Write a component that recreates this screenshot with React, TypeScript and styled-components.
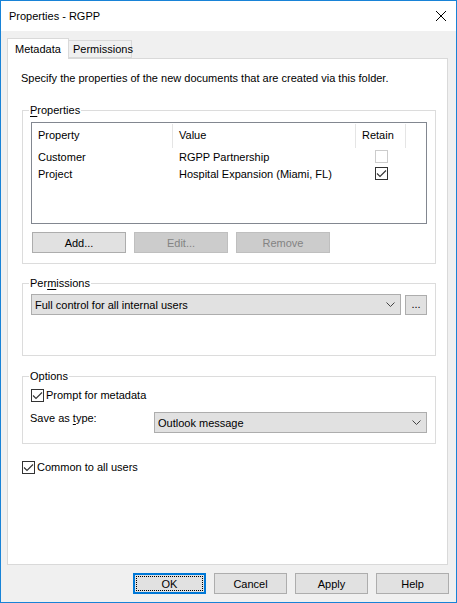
import React from "react";
import styled, { createGlobalStyle } from "styled-components";

const FONT = `"Liberation Sans", Arial, sans-serif`;

const GlobalStyle = createGlobalStyle`
  html, body { margin: 0; padding: 0; background: #ffffff; }
  body { font-family: ${FONT}; font-size: 11px; color: #000; }
  *, *::before, *::after { box-sizing: border-box; }
`;

const Window = styled.div`
  width: 457px;
  height: 603px;
  border: 1px solid #1883d7;
  background: #f0f0f0;
  display: flex;
  flex-direction: column;
  overflow: hidden;
`;

const TitleBar = styled.div`
  height: 30px;
  flex: none;
  background: #ffffff;
  display: flex;
  align-items: center;
  justify-content: space-between;
  padding: 0 10px 0 8px;
`;

const Title = styled.div`
  font-size: 11px;
  line-height: 16px;
  color: #000;
`;

const CloseIcon = styled.svg`
  width: 10px;
  height: 10px;
  display: block;
`;

const Body = styled.div`
  flex: 1;
  display: flex;
  flex-direction: column;
  padding: 7px 8px 0 6px;
  min-height: 0;
`;

const TabStrip = styled.div`
  display: flex;
  align-items: flex-end;
  height: 20px;
  flex: none;
`;

const Tab = styled.div<{ $active?: boolean }>`
  position: relative;
  z-index: ${(p) => (p.$active ? 1 : 0)};
  height: ${(p) => (p.$active ? "21px" : "18px")};
  margin-bottom: ${(p) => (p.$active ? "-1px" : "0")};
  width: ${(p) => (p.$active ? "62px" : "63px")};
  border: 1px solid #d9d9d9;
  border-bottom: ${(p) => (p.$active ? "none" : "1px solid #d9d9d9")};
  border-left: ${(p) => (p.$active ? "1px solid #d9d9d9" : "none")};
  background: ${(p) => (p.$active ? "#ffffff" : "#f0f0f0")};
  padding-left: ${(p) => (p.$active ? "7px" : "4px")};
  padding-bottom: ${(p) => (p.$active ? "1px" : "0")};
  display: flex;
  align-items: center;
  line-height: 16px;
`;

const Panel = styled.div`
  flex: 1;
  border: 1px solid #d9d9d9;
  background: #ffffff;
  display: flex;
  flex-direction: column;
  padding: 11px 11px 0 14px;
`;

const Description = styled.div`
  line-height: 16px;
  margin-left: -1px;
`;

const Group = styled.fieldset<{ $mt: number; $pb: number }>`
  margin: ${(p) => p.$mt}px 0 0 0;
  border: 1px solid #dcdcdc;
  padding: 3px 8px ${(p) => p.$pb}px 8px;
  min-width: 0;
`;

const Legend = styled.legend`
  line-height: 16px;
  padding: 0 1px;
  margin-left: -2px;
`;

const Access = styled.span`
  text-decoration: underline;
  text-underline-offset: 2px;
`;

const ListView = styled.div`
  margin-top: 1px;
  height: 102px;
  border: 1px solid #828790;
  background: #fff;
  display: flex;
  flex-direction: column;
`;

const COLS = "141px 183px 50px 1fr";

const HeaderRow = styled.div`
  display: grid;
  grid-template-columns: ${COLS};
  height: 25px;
  padding-top: 1px;
`;

const HeaderCell = styled.div<{ $sep?: boolean }>`
  padding-left: 6px;
  line-height: 23px;
  border-right: ${(p) => (p.$sep ? "1px solid #e5e5e5" : "none")};
`;

const DataRow = styled.div`
  display: grid;
  grid-template-columns: ${COLS};
  height: 17px;
  align-items: center;
`;

const Cell = styled.div`
  padding-left: 6px;
  line-height: 16px;
  white-space: nowrap;
`;

const CheckCell = styled.div`
  padding-left: 19px;
  display: flex;
  align-items: center;
`;

const Box = styled.span<{ $disabled?: boolean }>`
  width: 13px;
  height: 13px;
  flex: none;
  border: 1px solid ${(p) => (p.$disabled ? "#cccccc" : "#333333")};
  background: #fff;
  display: inline-flex;
  align-items: center;
  justify-content: center;
`;

const ButtonRow = styled.div`
  display: flex;
  gap: 8px;
  margin-top: 8px;
  margin-left: 1px;
`;

const Button = styled.button<{ $w: number; $disabled?: boolean; $default?: boolean }>`
  width: ${(p) => p.$w}px;
  height: 21px;
  padding: 0;
  font-family: ${FONT};
  font-size: 11px;
  line-height: 16px;
  color: ${(p) => (p.$disabled ? "#838383" : "#000")};
  background: ${(p) => (p.$disabled ? "#cccccc" : "#e1e1e1")};
  border: ${(p) =>
    p.$default ? "2px solid #0078d7" : p.$disabled ? "1px solid #bfbfbf" : "1px solid #adadad"};
  position: relative;
  display: flex;
  align-items: center;
  justify-content: center;
  ${(p) =>
    p.$default
      ? `&::after { content: ""; position: absolute; inset: 1px; border: 1px dotted #000; }`
      : ""}
`;

const ComboRow = styled.div`
  display: flex;
  gap: 4px;
`;

const Combo = styled.div`
  flex: 1;
  height: 21px;
  background: #e1e1e1;
  border: 1px solid #adadad;
  display: flex;
  align-items: center;
  justify-content: space-between;
  padding: 0 5px 0 3px;
  line-height: 16px;
`;

const Chevron = styled.svg`
  width: 9px;
  height: 5px;
  display: block;
`;

const MoreButton = styled.div`
  width: 22px;
  height: 20px;
  margin-top: 1px;
  background: #e1e1e1;
  border: 1px solid #adadad;
  display: flex;
  align-items: center;
  justify-content: center;
  line-height: 12px;
  padding-bottom: 3px;
`;

const CheckRow = styled.label<{ $mt?: number }>`
  display: flex;
  align-items: center;
  gap: 2px;
  height: 16px;
  line-height: 16px;
  margin-top: ${(p) => p.$mt ?? 0}px;
`;

const FormRow = styled.div`
  display: flex;
  align-items: flex-start;
  margin-top: 7px;
`;

const FieldLabel = styled.div`
  width: 124px;
  line-height: 16px;
  margin-left: -1px;
  padding-right: 1px;
`;

const ComboHolder = styled.div`
  margin-top: 2px;
  flex: 1;
  display: flex;
`;

const Footer = styled.div`
  flex: none;
  height: 37px;
  display: flex;
  justify-content: flex-end;
  align-items: flex-start;
  gap: 8px;
  padding-top: 8px;
  margin-right: -1px;
`;

const Check = ({ disabled, checked }: { disabled?: boolean; checked?: boolean }) => (
  <Box $disabled={disabled}>
    {checked && (
      <svg width="11" height="11" viewBox="0 0 11 11">
        <polyline points="1,5.5 4,8.5 10,2.5" fill="none" stroke="#333" strokeWidth="1.1" />
      </svg>
    )}
  </Box>
);

const Down = () => (
  <Chevron viewBox="0 0 9 5">
    <polyline points="0.5,0.5 4.5,4.5 8.5,0.5" fill="none" stroke="#444" strokeWidth="1" />
  </Chevron>
);

export default function App() {
  return (
    <>
      <GlobalStyle />
      <Window>
        <TitleBar>
          <Title>Properties - RGPP</Title>
          <CloseIcon viewBox="0 0 10 10">
            <path d="M0 0 L10 10 M10 0 L0 10" stroke="#000" strokeWidth="1" />
          </CloseIcon>
        </TitleBar>
        <Body>
          <TabStrip>
            <Tab $active>Metadata</Tab>
            <Tab>Permissions</Tab>
          </TabStrip>
          <Panel>
            <Description>
              Specify the properties of the new documents that are created via this folder.
            </Description>
            <Group $mt={16} $pb={10}>
              <Legend>
                <Access>P</Access>roperties
              </Legend>
              <ListView>
                <HeaderRow>
                  <HeaderCell $sep>Property</HeaderCell>
                  <HeaderCell $sep>Value</HeaderCell>
                  <HeaderCell $sep>Retain</HeaderCell>
                  <HeaderCell />
                </HeaderRow>
                <DataRow>
                  <Cell>Customer</Cell>
                  <Cell>RGPP Partnership</Cell>
                  <CheckCell>
                    <Check disabled />
                  </CheckCell>
                </DataRow>
                <DataRow>
                  <Cell>Project</Cell>
                  <Cell>Hospital Expansion (Miami, FL)</Cell>
                  <CheckCell>
                    <Check checked />
                  </CheckCell>
                </DataRow>
              </ListView>
              <ButtonRow>
                <Button $w={94}>Add...</Button>
                <Button $w={94} $disabled>
                  Edit...
                </Button>
                <Button $w={94} $disabled>
                  Remove
                </Button>
              </ButtonRow>
            </Group>
            <Group $mt={11} $pb={40}>
              <Legend>
                Per<Access>m</Access>issions
              </Legend>
              <ComboRow>
                <Combo>
                  <span>Full control for all internal users</span>
                  <Down />
                </Combo>
                <MoreButton>...</MoreButton>
              </ComboRow>
            </Group>
            <Group $mt={12} $pb={10}>
              <Legend>Options</Legend>
              <CheckRow>
                <Check checked />
                <span>Prompt for metadata</span>
              </CheckRow>
              <FormRow>
                <FieldLabel>
                  Save as <Access>t</Access>ype:
                </FieldLabel>
                <ComboHolder>
                  <Combo>
                    <span>Outlook message</span>
                    <Down />
                  </Combo>
                </ComboHolder>
              </FormRow>
            </Group>
            <CheckRow $mt={15}>
              <Check checked />
              <span>Common to all users</span>
            </CheckRow>
          </Panel>
          <Footer>
            <Button $w={73} $default>
              OK
            </Button>
            <Button $w={73}>Cancel</Button>
            <Button $w={73}>Apply</Button>
            <Button $w={73}>Help</Button>
          </Footer>
        </Body>
      </Window>
    </>
  );
}
